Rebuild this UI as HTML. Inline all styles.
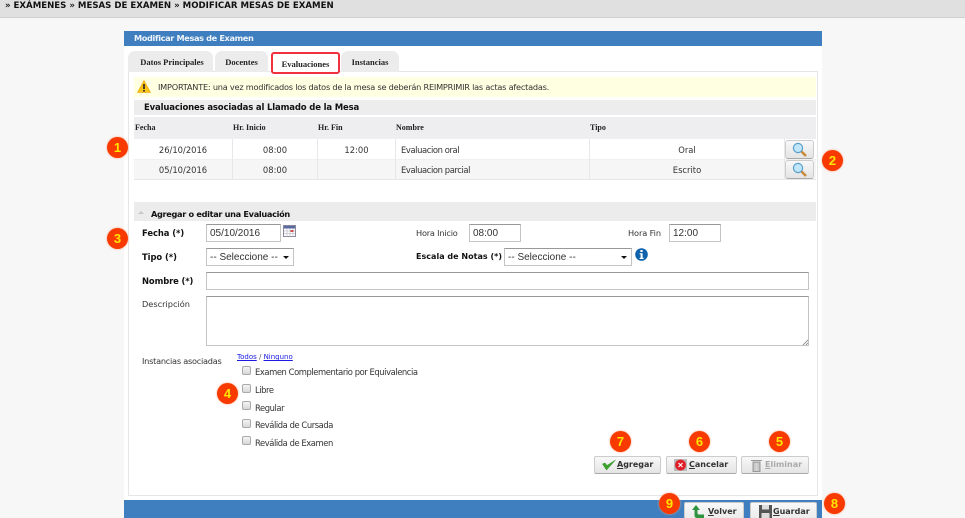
<!DOCTYPE html>
<html lang="es"><head><meta charset="utf-8"><title>Modificar Mesas de Examen</title>
<style>
html,body{margin:0;padding:0;width:965px;height:518px;overflow:hidden;background:#f7f7f7}
body{position:relative;font-family:"DejaVu Sans","Liberation Sans",sans-serif;font-size:8.4px;color:#333}
.a{position:absolute;white-space:nowrap}
.t{position:absolute;white-space:nowrap;line-height:12px}
.b{font-weight:bold;color:#111}
.s{font-family:"Liberation Serif",serif;font-weight:bold;color:#222;font-size:8px}
.tab{position:absolute;top:51px;height:21px;background:#ececec;border-radius:7px 7px 0 0;text-align:center;line-height:22px;font-family:"Liberation Serif",serif;font-weight:bold;font-size:8.5px;color:#222}
.inp{position:absolute;box-sizing:border-box;background:#fff;border:1px solid #c4c4c4;border-top-color:#999;font-family:"Liberation Sans",sans-serif;font-size:10px;color:#333;line-height:18px;padding-left:3px;white-space:nowrap}
.arr{position:absolute;width:0;height:0;border-left:3px solid transparent;border-right:3px solid transparent;border-top:3px solid #111}
.n{position:absolute;width:21px;height:21px;border-radius:50%;background:#f83a00;color:#ffe600;font:bold 13px/21px "Liberation Sans",sans-serif;text-align:center;box-shadow:0 0 2px #f9a080}
.btn{position:absolute;box-sizing:border-box;height:18px;background:linear-gradient(#f8f8f8,#e4e4e4);border:1px solid #ccc;border-bottom-color:#aaa;border-radius:2px;font-weight:bold;font-size:8px;line-height:16px;color:#333;white-space:nowrap}
.btn span{position:absolute;top:0}
.cb{position:absolute;box-sizing:border-box;left:242px;width:9px;height:9px;background:linear-gradient(#f4f4f4,#d8d8d8);border:1px solid #aaa;border-radius:2px}
.line{position:absolute;background:#e8e8e8}
.c{letter-spacing:-.43px}
.v{letter-spacing:-.4px}
</style></head><body>
<div class="a" style="left:0;top:0;width:965px;height:17px;background:#e0e0e0;border-bottom:1px solid #d0d0d0"></div>
<div class="t b" style="left:5px;top:0px;font-size:8.6px">» EXÁMENES » MESAS DE EXAMEN » MODIFICAR MESAS DE EXAMEN</div>

<div class="a" style="left:124px;top:31px;width:698px;height:470px;background:#fff"></div>
<div class="a" style="left:124px;top:31px;width:698px;height:15px;background:#407fbf"></div>
<div class="t" style="left:134px;top:32px;color:#eef4fa;font-weight:bold;font-size:8.2px;letter-spacing:-.36px">Modificar Mesas de Examen</div>

<div class="a" style="left:128px;top:71px;width:690px;height:425px;box-sizing:border-box;border:1px solid #e6e6e6"></div>
<div class="tab" style="left:128px;width:85px;padding-left:2px;box-sizing:border-box;padding-left:3px">Datos Principales</div>
<div class="tab" style="left:215px;width:53px">Docentes</div>
<div class="tab" style="left:341px;width:58px">Instancias</div>
<div class="a" style="left:271px;top:52px;width:69px;height:22px;box-sizing:border-box;background:#fff;border:2.5px solid #f0303f;border-radius:3px;text-align:center;line-height:20px;font-family:'Liberation Serif',serif;font-weight:bold;font-size:8.5px;color:#222">Evaluaciones</div>

<div class="a" style="left:134px;top:77px;width:682px;height:20px;background:#ffffe2"></div>
<svg class="a" style="left:137px;top:80px" width="14" height="13" viewBox="0 0 14 13"><path d="M7 .5L13.5 12.5H.5Z" fill="#fcc419" stroke="#e8a200" stroke-width=".6"/><rect x="6.2" y="4" width="1.6" height="5" fill="#222"/><rect x="6.2" y="10" width="1.6" height="1.6" fill="#222"/></svg>
<div class="t" style="left:158px;top:81px;color:#333;font-size:8.2px;letter-spacing:-.23px">IMPORTANTE: una vez modificados los datos de la mesa se deberán REIMPRIMIR las actas afectadas.</div>

<div class="a" style="left:134px;top:100px;width:682px;height:15px;background:#ededed"></div>
<div class="t b" style="left:144px;top:102px;font-size:8.5px;letter-spacing:-.16px">Evaluaciones asociadas al Llamado de la Mesa</div>

<div class="a" style="left:134px;top:117px;width:682px;height:22px;background:#eeeef0"></div>
<div class="t s" style="left:135px;top:122px">Fecha</div>
<div class="t s" style="left:233px;top:122px">Hr. Inicio</div>
<div class="t s" style="left:318px;top:122px">Hr. Fin</div>
<div class="t s" style="left:396px;top:122px">Nombre</div>
<div class="t s" style="left:590px;top:122px">Tipo</div>

<div class="a" style="left:134px;top:159px;width:682px;height:20px;background:#f6f6f6"></div>
<div class="line" style="left:134px;top:179px;width:682px;height:1px"></div>
<div class="line" style="left:134px;top:159px;width:682px;height:1px;background:#f0f0f0"></div>
<div class="line" style="left:232px;top:139px;width:1px;height:41px"></div>
<div class="line" style="left:317px;top:139px;width:1px;height:41px"></div>
<div class="line" style="left:395px;top:139px;width:1px;height:41px"></div>
<div class="line" style="left:589px;top:139px;width:1px;height:41px"></div>
<div class="line" style="left:784px;top:139px;width:1px;height:41px"></div>

<div class="t" style="left:134px;top:144px;width:98px;text-align:center">26/10/2016</div>
<div class="t" style="left:233px;top:144px;width:84px;text-align:center">08:00</div>
<div class="t" style="left:318px;top:144px;width:77px;text-align:center">12:00</div>
<div class="t v" style="left:401px;top:144px">Evaluacion oral</div>
<div class="t" style="left:590px;top:144px;width:194px;text-align:center">Oral</div>
<div class="t" style="left:134px;top:164px;width:98px;text-align:center">05/10/2016</div>
<div class="t" style="left:233px;top:164px;width:84px;text-align:center">08:00</div>
<div class="t v" style="left:401px;top:164px">Evaluacion parcial</div>
<div class="t" style="left:590px;top:164px;width:194px;text-align:center">Escrito</div>

<div class="btn" style="left:785px;top:140px;width:29px;height:19px;border-radius:3px"><svg class="a" style="left:6px;top:1px" width="16" height="15" viewBox="0 0 16 15"><path d="M9.5 9.5L14 14" stroke="#c98a3a" stroke-width="2.6"/><circle cx="6" cy="6" r="4.6" fill="#bfe6fa" stroke="#5a9fc8" stroke-width="1.2"/></svg></div>
<div class="btn" style="left:785px;top:160px;width:29px;height:19px;border-radius:3px"><svg class="a" style="left:6px;top:1px" width="16" height="15" viewBox="0 0 16 15"><path d="M9.5 9.5L14 14" stroke="#c98a3a" stroke-width="2.6"/><circle cx="6" cy="6" r="4.6" fill="#bfe6fa" stroke="#5a9fc8" stroke-width="1.2"/></svg></div>

<div class="a" style="left:134px;top:202px;width:682px;height:19px;background:#ececec"></div>
<div class="a" style="left:138px;top:211px;width:0;height:0;border-left:3px solid transparent;border-right:3px solid transparent;border-bottom:3px solid #c8c8c8"></div>
<div class="t b" style="left:151px;top:208px;font-size:8.2px;letter-spacing:-.32px">Agregar o editar una Evaluación</div>

<div class="t b" style="left:142px;top:227px;font-size:8.4px;letter-spacing:-.05px">Fecha (*)</div>
<div class="inp" style="left:206px;top:224px;width:75px;height:18px">05/10/2016</div>
<svg class="a" style="left:283px;top:225px" width="13" height="12" viewBox="0 0 13 12"><rect x=".5" y=".5" width="12" height="11" fill="#fff" stroke="#8a8a9a"/><rect x="1" y="1" width="11" height="2.5" fill="#5a6aa0"/><path d="M1 6h11M1 8.5h11M4 3.5v8M7 3.5v8M10 3.5v8" stroke="#c4c4d0" stroke-width=".7"/><rect x="7.5" y="5" width="3" height="2" fill="#d05050"/></svg>
<div class="t" style="left:416px;top:227px;font-size:8.2px;letter-spacing:-.2px">Hora Inicio</div>
<div class="inp" style="left:469px;top:224px;width:52px;height:18px">08:00</div>
<div class="t" style="left:628px;top:227px;font-size:8.2px;letter-spacing:-.1px">Hora Fin</div>
<div class="inp" style="left:669px;top:224px;width:52px;height:18px">12:00</div>

<div class="t b" style="left:142px;top:251px;font-size:8.4px;letter-spacing:-.05px">Tipo (*)</div>
<div class="inp" style="left:206px;top:248px;width:88px;height:18px">-- Seleccione --</div>
<div class="arr" style="left:283px;top:256px"></div>
<div class="t b" style="left:416px;top:251px;font-size:8px;letter-spacing:.02px">Escala de Notas (*)</div>
<div class="inp" style="left:504px;top:248px;width:128px;height:18px">-- Seleccione --</div>
<div class="arr" style="left:621px;top:256px"></div>
<svg class="a" style="left:635px;top:248px" width="13" height="13" viewBox="0 0 13 13"><circle cx="6.5" cy="6.5" r="6.3" fill="#0f62ac"/><rect x="5.4" y="2" width="2.2" height="2" fill="#fff"/><path d="M4.6 5.2h3v4.6h1v1.2H4.6V9.8h1V6.4h-1z" fill="#fff"/></svg>

<div class="t b" style="left:142px;top:275px;font-size:8.4px;letter-spacing:-.1px">Nombre (*)</div>
<div class="inp" style="left:206px;top:272px;width:603px;height:18px"></div>
<div class="t" style="left:142px;top:298px;font-size:8.2px">Descripción</div>
<div class="inp" style="left:206px;top:296px;width:603px;height:50px"></div>
<svg class="a" style="left:802px;top:339px" width="7" height="7" viewBox="0 0 7 7"><path d="M6 1L1 6M6 4L4 6" stroke="#777" stroke-width=".8"/></svg>

<div class="t" style="left:142px;top:355px;font-size:8.2px;letter-spacing:-.25px">Instancias asociadas</div>
<div class="t" style="left:237px;top:351px;font-size:7px;color:#555"><u style="color:#1a1ae0">Todos</u> / <u style="color:#1a1ae0">Ninguno</u></div>
<div class="cb" style="top:366px"></div>
<div class="t c" style="left:255px;top:366px;font-size:8.4px">Examen Complementario por Equivalencia</div>
<div class="cb" style="top:384px"></div>
<div class="t c" style="left:255px;top:384px;font-size:8.4px">Libre</div>
<div class="cb" style="top:401px"></div>
<div class="t c" style="left:255px;top:402px;font-size:8.4px">Regular</div>
<div class="cb" style="top:419px"></div>
<div class="t c" style="left:255px;top:419px;font-size:8.4px">Reválida de Cursada</div>
<div class="cb" style="top:436px"></div>
<div class="t c" style="left:255px;top:437px;font-size:8.4px">Reválida de Examen</div>

<div class="btn" style="left:594px;top:456px;width:67px">
<svg class="a" style="left:7px;top:2px" width="14" height="12" viewBox="0 0 14 12"><path d="M0.5 5L4.5 11L13.5 1L5 6.5L3 4Z" fill="#3da52e" stroke="#2a8a20" stroke-width=".5"/></svg>
<span style="left:22px"><u>A</u>gregar</span></div>
<div class="btn" style="left:666px;top:456px;width:71px">
<svg class="a" style="left:7px;top:1px" width="13" height="14" viewBox="0 0 13 14"><rect x="0" y="1" width="13" height="12" fill="#bbb"/><circle cx="6.5" cy="7" r="5.4" fill="#e01f2a"/><path d="M4.5 5L8.5 9M8.5 5L4.5 9" stroke="#fff" stroke-width="1.1"/></svg>
<span style="left:22px"><u>C</u>ancelar</span></div>
<div class="btn" style="left:741px;top:456px;width:68px;color:#aaa">
<svg class="a" style="left:9px;top:2px" width="11" height="13" viewBox="0 0 11 13"><path d="M0 1.5h11M2 3h7v9.5H2z" fill="#bbb" stroke="#999"/><path d="M4 4v8M5.5 4v8M7 4v8" stroke="#eee" stroke-width=".6"/></svg>
<span style="left:23px"><u>E</u>liminar</span></div>

<div class="a" style="left:124px;top:500px;width:698px;height:18px;background:#407fbf"></div>
<div class="btn" style="left:684px;top:502px;width:60px;height:18px;background:linear-gradient(#f8f8f8,#ebebeb)">
<svg class="a" style="left:7px;top:2px" width="13" height="14" viewBox="0 0 13 14"><path d="M4 0L8 5H5.5V8Q5.5 9.5 7 9.5H12V13H5Q2.5 13 2.5 10V5H0Z" fill="#2f9440"/></svg>
<span style="left:23px;top:1px"><u>V</u>olver</span></div>
<div class="btn" style="left:750px;top:502px;width:67px;height:18px;background:linear-gradient(#f8f8f8,#ebebeb)">
<svg class="a" style="left:8px;top:2px" width="13" height="14" viewBox="0 0 13 14"><path d="M0 0H13V14H0Z" fill="#555"/><rect x="3" y="0" width="7" height="4.5" fill="#ddd"/><rect x="2.5" y="8" width="8" height="6" fill="#ddd"/></svg>
<span style="left:22px;top:1px"><u>G</u>uardar</span></div>

<div class="n" style="left:107px;top:137px">1</div>
<div class="n" style="left:822px;top:150px">2</div>
<div class="n" style="left:107px;top:228px">3</div>
<div class="n" style="left:217px;top:383px">4</div>
<div class="n" style="left:769px;top:431px">5</div>
<div class="n" style="left:689px;top:431px">6</div>
<div class="n" style="left:610px;top:431px">7</div>
<div class="n" style="left:824px;top:493px">8</div>
<div class="n" style="left:659px;top:493px">9</div>
</body></html>
